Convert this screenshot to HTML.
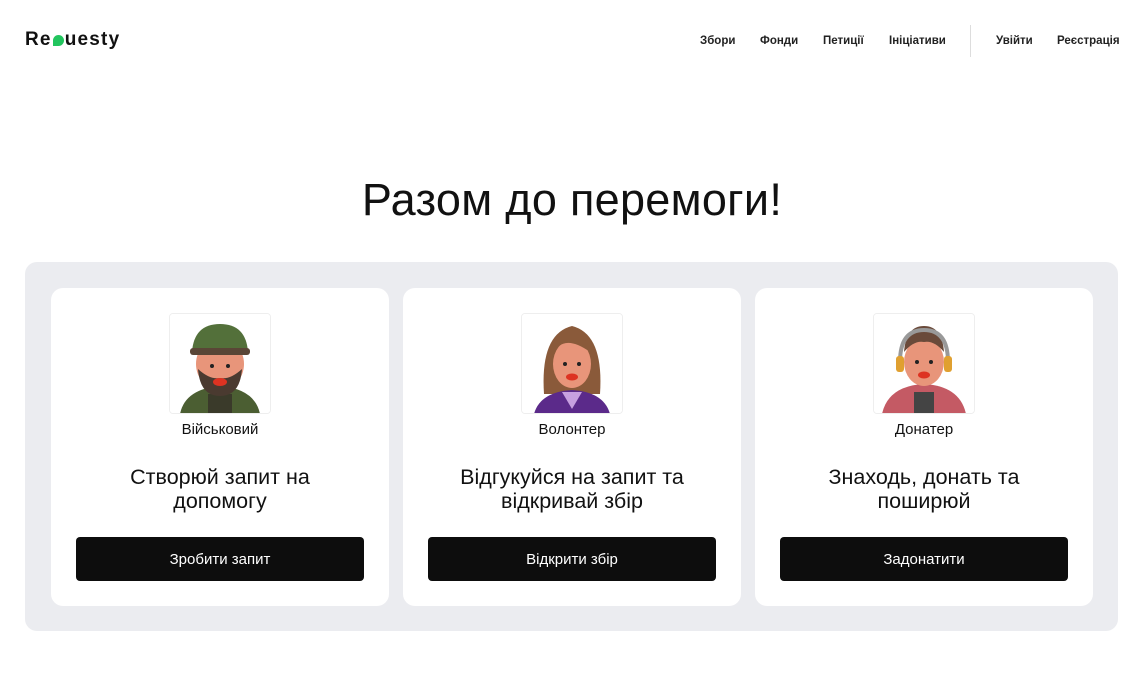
<!DOCTYPE html>
<html><head><meta charset="utf-8"><style>
*{margin:0;padding:0;box-sizing:border-box}
body{width:1144px;height:683px;background:#fff;font-family:"Liberation Sans",sans-serif;color:#111;position:relative;overflow:hidden}
.logo{position:absolute;left:25px;top:29px;font-size:19px;font-weight:700;letter-spacing:1.2px}
.logo .q{display:inline-block;width:11px;height:11px;background:#22c55e;border-radius:50% 50% 50% 0;margin:0 1px;vertical-align:-1px}
.nav{position:absolute;top:35px;font-size:11.5px;font-weight:700;color:#222}
.div{position:absolute;left:970px;top:25px;width:1px;height:32px;background:#ddd}
h1{position:absolute;left:0;right:0;top:174px;text-align:center;font-size:45px;font-weight:400;letter-spacing:0.3px}
.wrap{position:absolute;left:25px;top:262px;width:1093px;height:369px;background:#ebecf0;border-radius:12px}
.card{position:absolute;top:288px;width:338px;height:318px;background:#fff;border-radius:12px;text-align:center}
.av{position:absolute;left:118px;top:25px;width:102px;height:101px;border:1px solid #eee;border-radius:4px;overflow:hidden}
.lbl{position:absolute;left:0;right:0;top:133px;font-size:15px}
.h{position:absolute;left:0;right:0;top:177px;font-size:21.5px;line-height:24px}
.btn{position:absolute;left:25px;top:249px;width:288px;height:44px;background:#0d0d0d;color:#fff;border-radius:4px;font-size:15px;line-height:46px}
</style></head><body>
<div class="logo">Re<span class="q"></span>uesty</div>
<div class="nav" style="left:700px">Збори</div>
<div class="nav" style="left:760px">Фонди</div>
<div class="nav" style="left:823px">Петиції</div>
<div class="nav" style="left:889px">Ініціативи</div>
<div class="div"></div>
<div class="nav" style="left:996px">Увійти</div>
<div class="nav" style="left:1057px">Реєстрація</div>
<h1>Разом до перемоги!</h1>
<div class="wrap"></div>

<div class="card" style="left:51px">
<div class="av"><svg width="100" height="100"><rect width="100" height="100" fill="#fff"/>
<path d="M10 100 Q15 75 50 72 Q85 75 90 100Z" fill="#4b5e32"/><rect x="38" y="80" width="24" height="20" fill="#3a3a2a"/>
<ellipse cx="50" cy="50" rx="24" ry="26" fill="#e8957a"/>
<path d="M28 55 Q30 82 50 82 Q70 82 72 55 Q60 66 50 64 Q40 66 28 55Z" fill="#4a3a30"/>
<ellipse cx="50" cy="68" rx="7" ry="4" fill="#d32"/>
<path d="M22 38 Q24 10 50 10 Q76 10 78 38Z" fill="#53703a"/><rect x="20" y="34" width="60" height="7" rx="3" fill="#5a4636"/>
<circle cx="42" cy="52" r="2" fill="#222"/><circle cx="58" cy="52" r="2" fill="#222"/></svg></div>
<div class="lbl">Військовий</div>
<div class="h">Створюй запит на<br>допомогу</div>
<div class="btn">Зробити запит</div></div>

<div class="card" style="left:403px">
<div class="av"><svg width="100" height="100"><rect width="100" height="100" fill="#fff"/>
<path d="M22 80 Q18 20 50 12 Q82 20 78 80Z" fill="#8a5a3a"/>
<path d="M12 100 Q18 78 50 76 Q82 78 88 100Z" fill="#5b2a8a"/><path d="M40 78 L50 95 L60 78Z" fill="#c7a0e0"/>
<ellipse cx="50" cy="50" rx="19" ry="24" fill="#e8957a"/>
<path d="M30 42 Q40 18 68 38 Q66 22 50 20 Q32 22 30 42Z" fill="#8a5a3a"/>
<circle cx="43" cy="50" r="2" fill="#222"/><circle cx="57" cy="50" r="2" fill="#222"/><ellipse cx="50" cy="63" rx="6" ry="3.5" fill="#d32"/></svg></div>
<div class="lbl">Волонтер</div>
<div class="h">Відгукуйся на запит та<br>відкривай збір</div>
<div class="btn">Відкрити збір</div></div>

<div class="card" style="left:755px">
<div class="av"><svg width="100" height="100"><rect width="100" height="100" fill="#fff"/>
<path d="M8 100 Q14 72 50 70 Q86 72 92 100Z" fill="#c45a64"/><rect x="40" y="78" width="20" height="22" fill="#444"/>
<ellipse cx="50" cy="48" rx="20" ry="24" fill="#e8957a"/>
<path d="M30 38 Q32 12 50 12 Q68 12 70 38 Q60 26 50 28 Q40 26 30 38Z" fill="#6a4a3a"/>
<path d="M26 48 Q26 16 50 16 Q74 16 74 48" fill="none" stroke="#999" stroke-width="4"/>
<rect x="22" y="42" width="8" height="16" rx="3" fill="#e0a030"/><rect x="70" y="42" width="8" height="16" rx="3" fill="#e0a030"/>
<circle cx="43" cy="48" r="2" fill="#222"/><circle cx="57" cy="48" r="2" fill="#222"/><ellipse cx="50" cy="61" rx="6" ry="3.5" fill="#d32"/></svg></div>
<div class="lbl">Донатер</div>
<div class="h">Знаходь, донать та<br>поширюй</div>
<div class="btn">Задонатити</div></div>
</body></html>
